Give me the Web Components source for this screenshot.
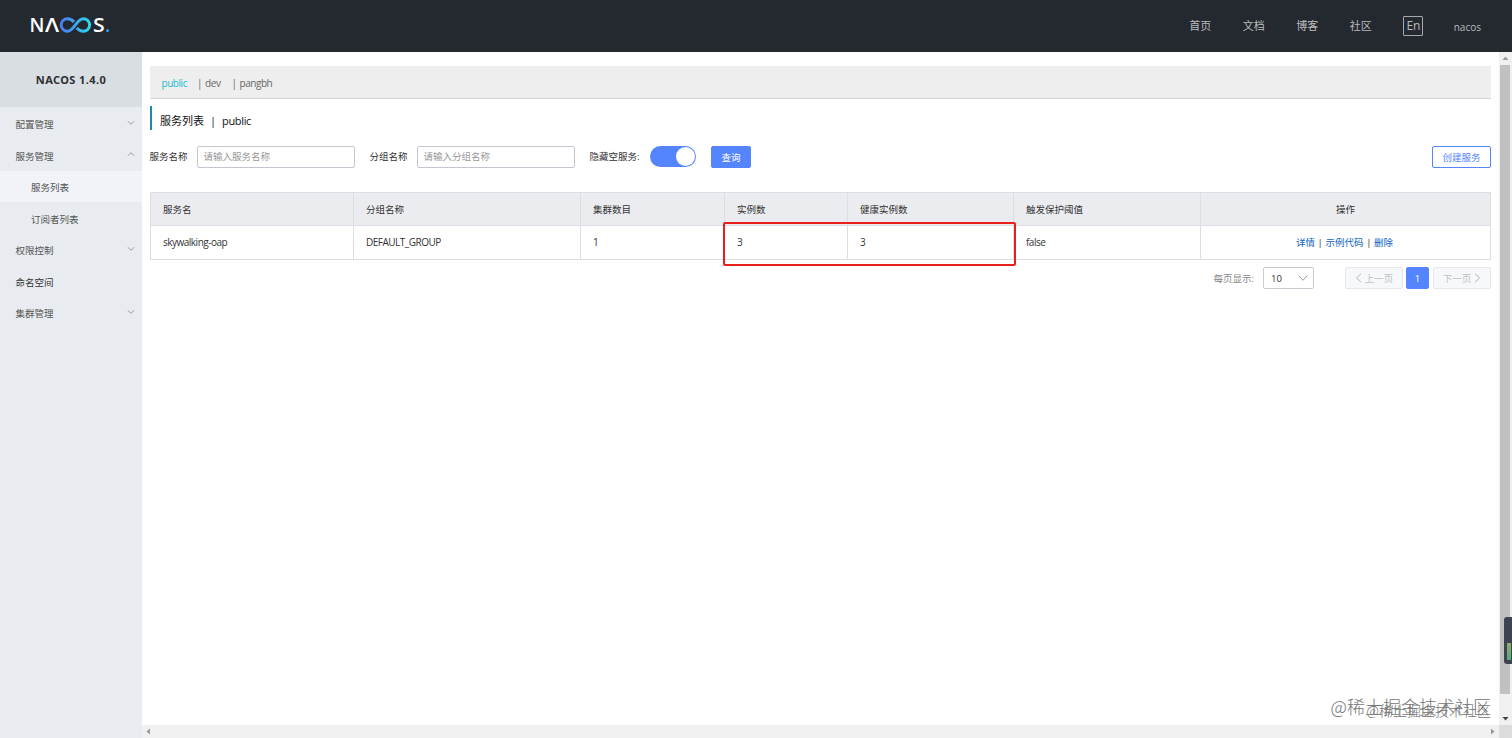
<!DOCTYPE html>
<html lang="zh-CN">
<head>
<meta charset="utf-8">
<title>Nacos</title>
<style>
    html, body {
        margin: 0;
        height: 100%;
        overflow: hidden;
    }
    body {
        font: 9.5px/14px "Open Sans", "Noto Sans CJK SC", sans-serif;
        color: #333;
        background: #fff;
    }
</style>
</head>
<body>
<nacos-app></nacos-app>

<script>
class NacosLogo extends HTMLElement {
    constructor() {
        super();
        this.attachShadow({mode: 'open'});
        this.shadowRoot.innerHTML = `
            <style>
            :host {
                display: flex;
                align-items: center;
                height: 20px;
                color: #fff;
                font: 600 19px/20px "Open Sans", sans-serif;
            }
            span { display: block; }
            .n { width: 13px; text-indent: -1.500px; }
            .a { width: 13px; margin-left: 1px; transform: scaleX(1.180); transform-origin: 0 50%; }
            .s { width: 11px; margin-left: 1px; transform: scaleX(1.120); transform-origin: 0 50%; }
            .dot { color: #2b9ff0; margin-left: 1px; }
            svg { display: block; margin-left: 1px; }
            </style>
            <span class="n">N</span><span class="a">Λ</span>
            <svg width="33" height="16" viewBox="0 0 33 16" fill="none" stroke-width="2.9">
                <defs>
                    <linearGradient id="g" x1="0" x2="1" y1="0" y2="0">
                        <stop offset="0" stop-color="#4a7cf0"/>
                        <stop offset=".5" stop-color="#3fa5ee"/>
                        <stop offset="1" stop-color="#27dcec"/>
                    </linearGradient>
                </defs>
                <path stroke="url(#g)" d="M15 5C13 2.700 11.500 1.800 8.500 1.800C5 1.800 2.200 4.500 2.200 8C2.200 11.500 5 14.200 8.500 14.200C15 14.200 17.500 1.800 24.300 1.800C27.800 1.800 30.600 4.500 30.600 8C30.600 11.500 27.800 14.200 24.300 14.200C21.300 14.200 19.700 13.200 17.700 11"/>
            </svg>
            <span class="s">S</span><span class="dot">.</span>
        `
    }
}
customElements.define('nacos-logo', NacosLogo);

class NacosHeader extends HTMLElement {
    constructor() {
        super();
        this.attachShadow({mode: 'open'});
        this.shadowRoot.innerHTML = `
            <style>
            :host {
                display: flex;
                justify-content: space-between;
                align-items: center;
                box-sizing: border-box;
                height: 52px;
                padding: 0 31px;
                background: #242930;
                color: #b9bbbe;
            }
            nacos-logo { margin-bottom: 2px; }
            nav {
                display: flex;
                align-items: center;
                gap: 31.500px;
                font-size: 11px;
                line-height: 16px;
            }
            .lang {
                box-sizing: border-box;
                width: 20px;
                height: 20px;
                border: 1px solid #a5a7aa;
                border-radius: 1px;
                line-height: 17px;
                font-size: 12px;
                letter-spacing: -.3px;
                text-align: center;
            }
            .user { font-size: 10px; margin-left: -1px; padding-top: 1px; }
            </style>
            <nacos-logo></nacos-logo>
            <nav>
                <span>首页</span>
                <span>文档</span>
                <span>博客</span>
                <span>社区</span>
                <span class="lang">En</span>
                <span class="user">nacos</span>
            </nav>
        `
    }
}
customElements.define('nacos-header', NacosHeader);

class NacosMenuItem extends HTMLElement {
    constructor() {
        super();
        this.attachShadow({mode: 'open'});
        this.shadowRoot.innerHTML = `
            <style>
            :host {
                display: flex;
                justify-content: space-between;
                align-items: center;
                box-sizing: border-box;
                height: 31.500px;
                padding: 4px 7px 0 15.500px;
                color: #555;
            }
            :host([sub]) { padding-left: 31px; }
            :host([active]) { background: #f1f3f8; }
            :host([dark]) { color: #333; }
            svg { display: none; margin-top: -5px; }
            :host([arrow]) svg { display: block; }
            :host([arrow="up"]) svg { transform: scaleY(-1); }
            </style>
            <slot></slot>
            <svg width="8" height="6" viewBox="0 0 8 6" fill="none" stroke="#929aa2"><path d="M1 1.300L4 4.300L7 1.300"/></svg>
        `
    }
}
customElements.define('nacos-menu-item', NacosMenuItem);

class NacosSidebar extends HTMLElement {
    constructor() {
        super();
        this.attachShadow({mode: 'open'});
        this.shadowRoot.innerHTML = `
            <style>
            :host {
                display: block;
                background: #e8ecf0;
            }
            h1 {
                margin: 0 0 .5px;
                height: 55px;
                background: #d9dee3;
                color: #2c2f33;
                font: bold 11px/55px "Noto Sans", sans-serif;
                letter-spacing: .4px;
                text-align: center;
            }
            </style>
            <h1>NACOS 1.4.0</h1>
            <slot></slot>
        `
    }
}
customElements.define('nacos-sidebar', NacosSidebar);

class NacosNamespaces extends HTMLElement {
    constructor() {
        super();
        this.attachShadow({mode: 'open'});
        this.shadowRoot.innerHTML = `
            <style>
            :host {
                display: flex;
                align-items: center;
                box-sizing: border-box;
                height: 33px;
                padding: 2px 11.500px 0;
                background: #eee;
                border-bottom: 1px solid #d4d6d8;
                color: #666;
                font-size: 10px;
                letter-spacing: -.45px;
            }
            .current { color: #22bcd2; margin-right: 10px; }
            .dev { margin-right: 11px; }
            i { font-style: normal; margin-right: 3px; }
            </style>
            <span class="current">public</span>
            <i>|</i><span class="dev">dev</span>
            <i>|</i><span>pangbh</span>
        `
    }
}
customElements.define('nacos-namespaces', NacosNamespaces);

class NacosTitle extends HTMLElement {
    constructor() {
        super();
        this.attachShadow({mode: 'open'});
        this.shadowRoot.innerHTML = `
            <style>
            :host {
                display: flex;
                align-items: center;
                box-sizing: border-box;
                height: 24px;
                padding: 6px 0 0 8px;
                border-left: 2px solid #1c8ba8;
                color: #111;
                font-size: 11px;
                line-height: 16px;
                gap: 6px;
            }
            ::slotted(.latin) { letter-spacing: -.35px; }
            </style>
            <slot></slot>
        `
    }
}
customElements.define('nacos-title', NacosTitle);

class NacosField extends HTMLElement {
    constructor() {
        super();
        this.attachShadow({mode: 'open'});
        this.shadowRoot.innerHTML = `
            <style>
            :host { display: flex; align-items: center; gap: 9px; }
            div {
                box-sizing: border-box;
                width: 158px;
                height: 22px;
                padding: 0 6px;
                border: 1px solid #c4c6cf;
                border-radius: 2px;
                line-height: 20px;
                color: #999;
            }
            </style>
            <slot></slot>
            <div>${this.getAttribute('placeholder')}</div>
        `
    }
}
customElements.define('nacos-field', NacosField);

class NacosSwitch extends HTMLElement {
    constructor() {
        super();
        this.attachShadow({mode: 'open'});
        this.shadowRoot.innerHTML = `
            <style>
            :host {
                display: flex;
                justify-content: flex-end;
                box-sizing: border-box;
                width: 46px;
                height: 21px;
                padding: 1px;
                border-radius: 11px;
                background: #5584ff;
            }
            span { width: 19px; height: 19px; border-radius: 50%; background: #fff; }
            </style>
            <span></span>
        `
    }
}
customElements.define('nacos-switch', NacosSwitch);

class NacosButton extends HTMLElement {
    constructor() {
        super();
        this.attachShadow({mode: 'open'});
        this.shadowRoot.innerHTML = `
            <style>
            :host {
                display: flex;
                justify-content: center;
                align-items: center;
                gap: 3px;
                box-sizing: border-box;
                height: 22px;
                padding: 1px 9.500px 0;
                border: 1px solid #5584ff;
                border-radius: 2px;
                color: #5584ff;
            }
            :host([primary]) { background: #5584ff; color: #fff; }
            :host([disabled]) { background: #f7f8fa; border-color: #e6e7eb; color: #bfc0c4; }
            </style>
            <slot></slot>
        `
    }
}
customElements.define('nacos-button', NacosButton);

class NacosTable extends HTMLElement {
    constructor() {
        super();
        this.attachShadow({mode: 'open'});
        this.shadowRoot.innerHTML = `
            <style>
            :host { display: block; position: relative; }
            .grid {
                display: grid;
                grid-template-columns: 203px 227px 144px 123px 166px 187px 1fr;
                grid-template-rows: 33px 33px;
                border: 1px solid #dcdee3;
                border-right: 0;
            }
            .grid > div {
                box-sizing: border-box;
                padding: 0 12px;
                border-right: 1px solid #dcdee3;
                line-height: 33px;
                white-space: nowrap;
            }
            .grid > .th { background: #ebecf0; border-bottom: 1px solid #dcdee3; }
            .grid > .last { text-align: center; }
            .grid > .latin { font-size: 10px; letter-spacing: -.5px; }
            .grid > .ops { word-spacing: .2px; padding-right: 14px; }
            a { color: #0d63c4; }
            .mark {
                position: absolute;
                left: 573px;
                top: 30px;
                width: 293px;
                height: 44px;
                box-sizing: border-box;
                border: 2px solid #e8201c;
                border-radius: 2px;
            }
            </style>
            <div class="grid">
                <div class="th">服务名</div>
                <div class="th">分组名称</div>
                <div class="th">集群数目</div>
                <div class="th">实例数</div>
                <div class="th">健康实例数</div>
                <div class="th">触发保护阈值</div>
                <div class="th last">操作</div>
                <div class="latin">skywalking-oap</div>
                <div class="latin">DEFAULT_GROUP</div>
                <div class="latin">1</div>
                <div class="latin">3</div>
                <div class="latin">3</div>
                <div class="latin">false</div>
                <div class="last ops"><a>详情</a> | <a>示例代码</a> | <a>删除</a></div>
            </div>
            <div class="mark"></div>
        `
    }
}
customElements.define('nacos-table', NacosTable);

class NacosPagination extends HTMLElement {
    constructor() {
        super();
        this.attachShadow({mode: 'open'});
        this.shadowRoot.innerHTML = `
            <style>
            :host {
                display: flex;
                justify-content: flex-end;
                align-items: center;
                height: 22px;
                color: #888;
            }
            .label { padding-top: 1px; }
            .size {
                display: flex;
                justify-content: space-between;
                align-items: center;
                box-sizing: border-box;
                width: 51px;
                height: 22px;
                margin: 0 31px 0 9px;
                padding: 1px 5px 0 7px;
                border: 1px solid #c9cbd2;
                border-radius: 2px;
                color: #333;
            }
            svg { display: block; fill: none; stroke: #999ca3; }
            .size svg { margin-top: -2px; }
            nacos-button svg { stroke: #b3b5ba; margin-top: -1px; }
            .prev, .next { width: 58px; padding: 1px 0 0; }
            .page { width: 23px; padding: 1px 0 0; margin: 0 4px 0 3px; }
            </style>
            <span class="label">每页显示:</span>
            <div class="size">10<svg width="10" height="8" viewBox="0 0 10 8"><path d="M.8 1.500L5 6.300L9.200 1.500"/></svg></div>
            <nacos-button class="prev" disabled><svg width="7" height="10" viewBox="0 0 7 10"><path d="M6 .8L1.500 5L6 9.200"/></svg>上一页</nacos-button>
            <nacos-button class="page" primary>1</nacos-button>
            <nacos-button class="next" disabled>下一页<svg width="7" height="10" viewBox="0 0 7 10"><path d="M1 .8L5.500 5L1 9.200"/></svg></nacos-button>
        `
    }
}
customElements.define('nacos-pagination', NacosPagination);

class NacosScrollbar extends HTMLElement {
    constructor() {
        super();
        this.attachShadow({mode: 'open'});
        this.shadowRoot.innerHTML = `
            <style>
            :host {
                display: flex;
                justify-content: space-between;
                align-items: center;
                background: #f0f0f0;
            }
            :host([vertical]) { flex-direction: column; }
            .thumb { display: none; }
            :host([vertical]) .thumb {
                display: block;
                flex: 1;
                width: 10px;
                margin: 0 1px 18px 0;
                background: #c1c1c1;
            }
            svg { display: block; flex: none; width: 13px; height: 13px; fill: #999; }
            :host([vertical]) svg { transform: rotate(90deg); }
            :host([vertical]) svg:last-of-type { fill: #444; }
            </style>
            <svg viewBox="0 0 13 13"><path d="M8 3.500V9.500L4.500 6.500Z"/></svg>
            <div class="thumb"></div>
            <svg viewBox="0 0 13 13"><path d="M5 3.500V9.500L8.500 6.500Z"/></svg>
        `
    }
}
customElements.define('nacos-scrollbar', NacosScrollbar);

class NacosServiceList extends HTMLElement {
    constructor() {
        super();
        this.attachShadow({mode: 'open'});
        this.shadowRoot.innerHTML = `
            <style>
            :host {
                display: block;
                box-sizing: border-box;
                padding: 14px 8px 0;
                background: #fff;
            }
            nacos-title { margin: 7px 0 16px; }
            form { display: flex; align-items: center; height: 22px; margin: 0 0 24px -.5px; }
            nacos-field { margin-right: 15px; }
            nacos-switch { margin: 0 15.500px 1px 10px; }
            .create { margin-left: auto; }
            nacos-pagination { margin-top: 7px; }
            </style>
            <nacos-namespaces></nacos-namespaces>
            <nacos-title><span>服务列表</span><span>|</span><span class="latin">public</span></nacos-title>
            <form>
                <nacos-field placeholder="请输入服务名称">服务名称</nacos-field>
                <nacos-field placeholder="请输入分组名称">分组名称</nacos-field>
                <span>隐藏空服务:</span>
                <nacos-switch></nacos-switch>
                <nacos-button primary>查询</nacos-button>
                <nacos-button class="create">创建服务</nacos-button>
            </form>
            <nacos-table></nacos-table>
            <nacos-pagination></nacos-pagination>
        `
    }
}
customElements.define('nacos-service-list', NacosServiceList);

class NacosApp extends HTMLElement {
    constructor() {
        super();
        this.attachShadow({mode: 'open'});
        this.shadowRoot.innerHTML = `
            <style>
            :host {
                display: grid;
                position: relative;
                grid-template: 52px 1fr 13px / 142px 1fr 13px;
                height: 738px;
                width: 1512px;
                overflow: hidden;
            }
            nacos-header { grid-column: 1 / -1; }
            nacos-sidebar { grid-row: 2 / 4; }
            .corner { background: #dcdcdc; }
            .watermark {
                position: absolute;
                right: 21px;
                white-space: nowrap;
                color: #757575;
                font-family: "Noto Sans CJK SC", sans-serif;
                font-weight: 300;
            }
            .large { top: 693px; font-size: 18px; line-height: 26px; }
            .small { top: 699px; font-size: 14px; line-height: 22px; }
            .gauge {
                position: absolute;
                right: 0;
                top: 617px;
                width: 8px;
                height: 47px;
                border-radius: 3px 0 0 3px;
                background: #3d4350;
            }
            .gauge::after {
                content: "";
                position: absolute;
                left: 3px;
                bottom: 4px;
                width: 4px;
                height: 17px;
                background: linear-gradient(#8fae6a, #4fae7c);
            }
            </style>
            <nacos-header></nacos-header>
            <nacos-sidebar>
                <nacos-menu-item arrow="down">配置管理</nacos-menu-item>
                <nacos-menu-item arrow="up">服务管理</nacos-menu-item>
                <nacos-menu-item sub active>服务列表</nacos-menu-item>
                <nacos-menu-item sub>订阅者列表</nacos-menu-item>
                <nacos-menu-item arrow="down">权限控制</nacos-menu-item>
                <nacos-menu-item dark>命名空间</nacos-menu-item>
                <nacos-menu-item arrow="down">集群管理</nacos-menu-item>
            </nacos-sidebar>
            <nacos-service-list></nacos-service-list>
            <nacos-scrollbar vertical></nacos-scrollbar>
            <nacos-scrollbar></nacos-scrollbar>
            <div class="corner"></div>
            <div class="watermark large">@稀土掘金技术社区</div>
            <div class="watermark small">@稀土掘金技术社区</div>
            <div class="gauge"></div>
        `
    }
}
customElements.define('nacos-app', NacosApp);
</script>
</body>
</html>
